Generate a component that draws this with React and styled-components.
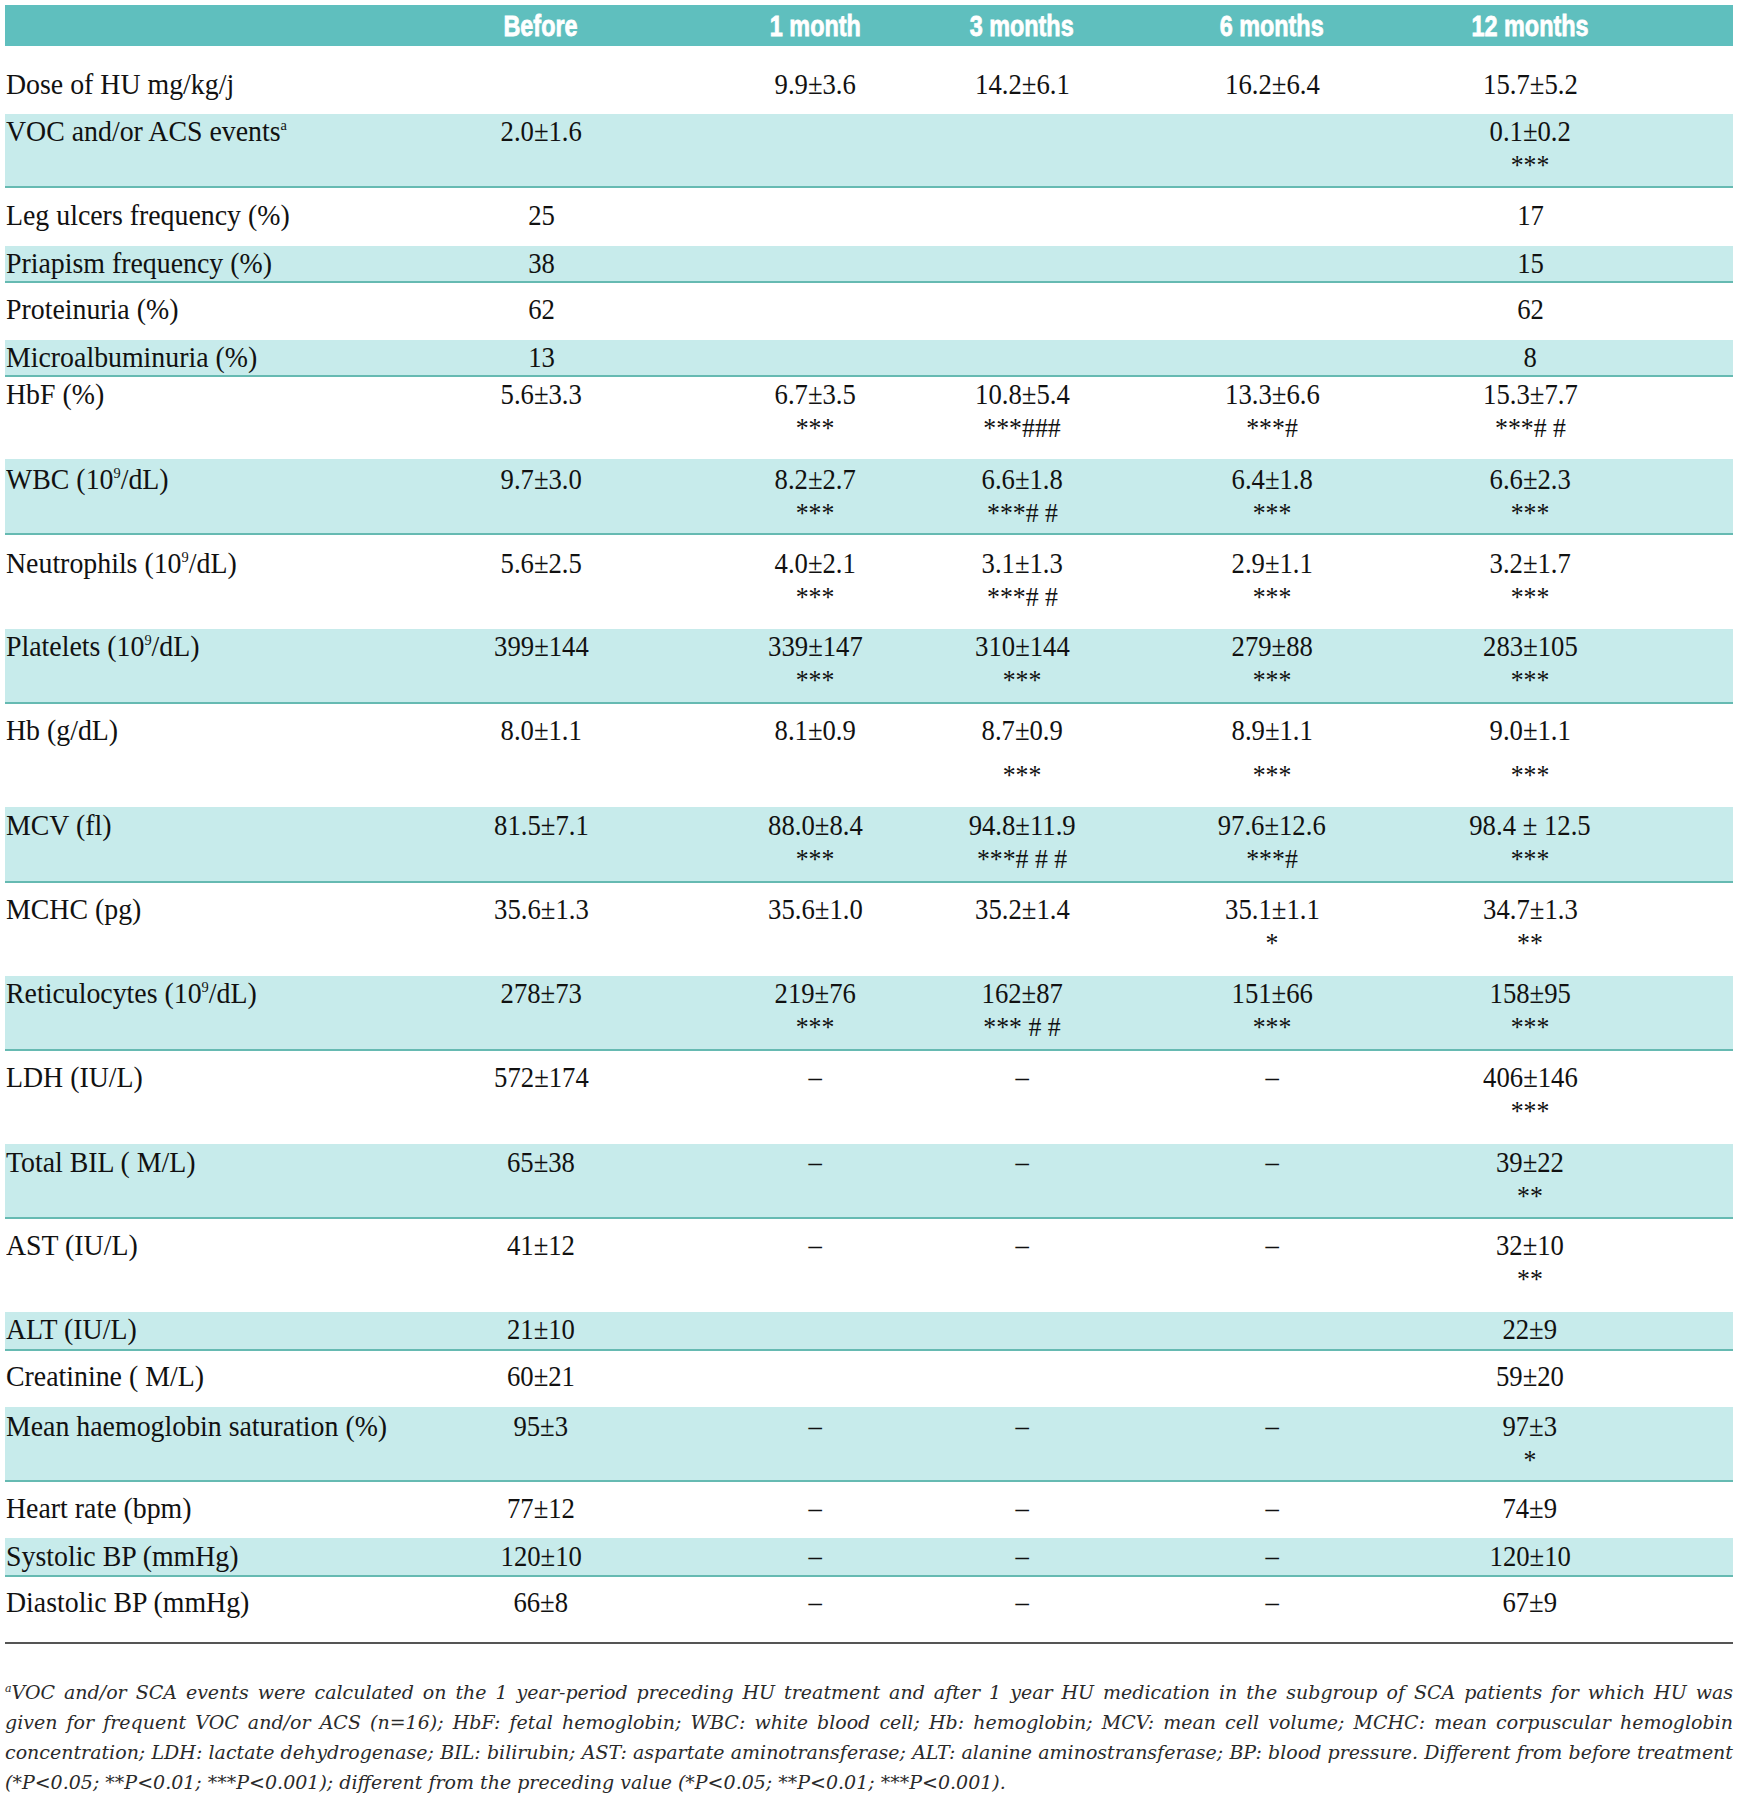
import React from 'react';
import styled, { createGlobalStyle } from 'styled-components';

const GlobalStyle = createGlobalStyle`
  body {
    margin: 0;
    background: #ffffff;
  }
`;

const COLUMNS = '399px 274px 274px 140px 360px 156px';

const headers = ['Before', '1 month', '3 months', '6 months', '12 months'];

const Pow = styled.sup`
  font-size: 15px;
  line-height: 0;
  vertical-align: 11px;
`;

// cells: a string, or [value, significance] for two lines
const rows = [
  { label: 'Dose of HU mg/kg/j', h: 68, pad: 21, cells: ['', '9.9±3.6', '14.2±6.1', '16.2±6.4', '15.7±5.2'] },
  { label: <>VOC and/or ACS events<Pow>a</Pow></>, h: 74, pad: 0, shaded: true, cells: ['2.0±1.6', '', '', '', ['0.1±0.2', '***']] },
  { label: 'Leg ulcers frequency (%)', h: 58, pad: 10, cells: ['25', '', '', '', '17'] },
  { label: 'Priapism frequency (%)', h: 37, pad: 0, shaded: true, cells: ['38', '', '', '', '15'] },
  { label: 'Proteinuria (%)', h: 57, pad: 9, cells: ['62', '', '', '', '62'] },
  { label: 'Microalbuminuria (%)', h: 37, pad: 0, shaded: true, cells: ['13', '', '', '', '8'] },
  { label: 'HbF (%)', h: 82, pad: 0, cells: ['5.6±3.3', ['6.7±3.5', '***'], ['10.8±5.4', '***###'], ['13.3±6.6', '***#'], ['15.3±7.7', '***# #']] },
  { label: <>WBC (10<Pow>9</Pow>/dL)</>, h: 76, pad: 3, shaded: true, cells: ['9.7±3.0', ['8.2±2.7', '***'], ['6.6±1.8', '***# #'], ['6.4±1.8', '***'], ['6.6±2.3', '***']] },
  { label: <>Neutrophils (10<Pow>9</Pow>/dL)</>, h: 94, pad: 11, cells: ['5.6±2.5', ['4.0±2.1', '***'], ['3.1±1.3', '***# #'], ['2.9±1.1', '***'], ['3.2±1.7', '***']] },
  { label: <>Platelets (10<Pow>9</Pow>/dL)</>, h: 75, pad: 0, shaded: true, cells: ['399±144', ['339±147', '***'], ['310±144', '***'], ['279±88', '***'], ['283±105', '***']] },
  { label: 'Hb (g/dL)', h: 103, pad: 9, gap: 11, cells: ['8.0±1.1', '8.1±0.9', ['8.7±0.9', '***'], ['8.9±1.1', '***'], ['9.0±1.1', '***']] },
  { label: 'MCV (fl)', h: 76, pad: 1, shaded: true, cells: ['81.5±7.1', ['88.0±8.4', '***'], ['94.8±11.9', '***# # #'], ['97.6±12.6', '***#'], ['98.4 ± 12.5', '***']] },
  { label: 'MCHC (pg)', h: 93, pad: 9, cells: ['35.6±1.3', '35.6±1.0', '35.2±1.4', ['35.1±1.1', '*'], ['34.7±1.3', '**']] },
  { label: <>Reticulocytes (10<Pow>9</Pow>/dL)</>, h: 75, pad: 0, shaded: true, cells: ['278±73', ['219±76', '***'], ['162±87', '*** # #'], ['151±66', '***'], ['158±95', '***']] },
  { label: 'LDH (IU/L)', h: 93, pad: 9, cells: ['572±174', '–', '–', '–', ['406±146', '***']] },
  { label: 'Total BIL ( M/L)', h: 75, pad: 1, shaded: true, cells: ['65±38', '–', '–', '–', ['39±22', '**']] },
  { label: 'AST (IU/L)', h: 93, pad: 9, cells: ['41±12', '–', '–', '–', ['32±10', '**']] },
  { label: 'ALT (IU/L)', h: 39, pad: 0, shaded: true, cells: ['21±10', '', '', '', '22±9'] },
  { label: 'Creatinine ( M/L)', h: 56, pad: 8, cells: ['60±21', '', '', '', '59±20'] },
  { label: 'Mean haemoglobin saturation (%)', h: 75, pad: 2, shaded: true, cells: ['95±3', '–', '–', '–', ['97±3', '*']] },
  { label: 'Heart rate (bpm)', h: 56, pad: 9, cells: ['77±12', '–', '–', '–', '74±9'] },
  { label: 'Systolic BP (mmHg)', h: 39, pad: 1, shaded: true, cells: ['120±10', '–', '–', '–', '120±10'] },
  { label: 'Diastolic BP (mmHg)', h: 67, pad: 8, last: true, cells: ['66±8', '–', '–', '–', '67±9'] },
];

const footnote = [
  <><FootSup>a</FootSup>VOC and/or SCA events were calculated on the 1 year-period preceding HU treatment and after 1 year HU medication in the subgroup of SCA patients for which HU was</>,
  'given for frequent VOC and/or ACS (n=16); HbF: fetal hemoglobin; WBC: white blood cell; Hb: hemoglobin; MCV: mean cell volume; MCHC: mean corpuscular hemoglobin',
  'concentration; LDH: lactate dehydrogenase; BIL: bilirubin; AST: aspartate aminotransferase; ALT: alanine aminostransferase; BP: blood pressure. Different from before treatment',
  '(*P<0.05; **P<0.01; ***P<0.001); different from the preceding value (*P<0.05; **P<0.01; ***P<0.001).',
];

function FootSup({ children }) {
  return <FootMark>{children}</FootMark>;
}

const App = () => {
  return (
    <>
      <GlobalStyle />
      <Page>
        <HeaderRow>
          <span />
          {headers.map((h) => (
            <HeadCell key={h}>
              <HeadText>{h}</HeadText>
            </HeadCell>
          ))}
        </HeaderRow>

        {rows.map((row, i) => (
          <Row key={i} $h={row.h} $pad={row.pad} $shaded={row.shaded} $last={row.last}>
            <LabelCell>
              <Squeeze $origin="left" $scale={0.96}>{row.label}</Squeeze>
            </LabelCell>
            {row.cells.map((cell, j) => {
              const [value, sig] = Array.isArray(cell) ? cell : [cell, null];
              return (
                <ValueCell key={j}>
                  {value && <Squeeze>{value}</Squeeze>}
                  {sig && <Sig $gap={row.gap}>{sig}</Sig>}
                </ValueCell>
              );
            })}
          </Row>
        ))}

        <Footnote>
          {footnote.map((line, i) => (
            <FootLine key={i} $last={i === footnote.length - 1}>
              {line}
            </FootLine>
          ))}
        </Footnote>
      </Page>
    </>
  );
};

const Page = styled.div`
  width: 1728px;
  padding: 5px 0 0 5px;
  font-family: 'Liberation Serif', 'Times New Roman', serif;
  color: #111111;
`;

const HeaderRow = styled.div`
  display: grid;
  grid-template-columns: ${COLUMNS};
  height: 41px;
  padding-right: 125px;
  background: #5fbfbe;
`;

const HeadCell = styled.div`
  display: flex;
  justify-content: center;
  align-items: center;
  padding-top: 1px;
`;

const HeadText = styled.span`
  display: inline-block;
  font-family: 'Liberation Sans', Arial, sans-serif;
  font-weight: 700;
  font-size: 30px;
  line-height: 38px;
  color: #ffffff;
  white-space: nowrap;
  -webkit-text-stroke: 0.8px #ffffff;
  transform: scaleX(0.78);
`;

const Row = styled.div`
  box-sizing: border-box;
  display: grid;
  grid-template-columns: ${COLUMNS};
  align-items: start;
  height: ${(p) => p.$h}px;
  padding: ${(p) => p.$pad}px 125px 0 0;
  background: ${(p) => (p.$shaded ? '#c7ebeb' : '#ffffff')};
  border-bottom: ${(p) =>
    p.$shaded ? '2px solid #66bab2' : p.$last ? '2px solid #555555' : 'none'};
  font-size: 29px;
  line-height: 34px;
`;

const LabelCell = styled.div`
  padding-left: 1px;
  white-space: nowrap;
`;

const ValueCell = styled.div`
  display: flex;
  flex-direction: column;
  align-items: center;
  white-space: nowrap;
`;

const Squeeze = styled.span`
  display: inline-block;
  transform: scaleX(${(p) => p.$scale || 0.92});
  transform-origin: ${(p) => p.$origin || 'center'};
`;

const Sig = styled(Squeeze)`
  margin-top: ${(p) => p.$gap || 0}px;
  font-size: 28px;
`;

const Footnote = styled.div`
  margin-top: 33px;
  font-family: 'DejaVu Serif', 'Liberation Serif', serif;
  font-style: italic;
  font-size: 19px;
  line-height: 30px;
  color: #2a2a2a;
`;

const FootLine = styled.div`
  text-align: ${(p) => (p.$last ? 'left' : 'justify')};
  text-align-last: ${(p) => (p.$last ? 'left' : 'justify')};
`;

const FootMark = styled.sup`
  font-size: 11px;
  line-height: 0;
  vertical-align: 7px;
`;

export default App;
